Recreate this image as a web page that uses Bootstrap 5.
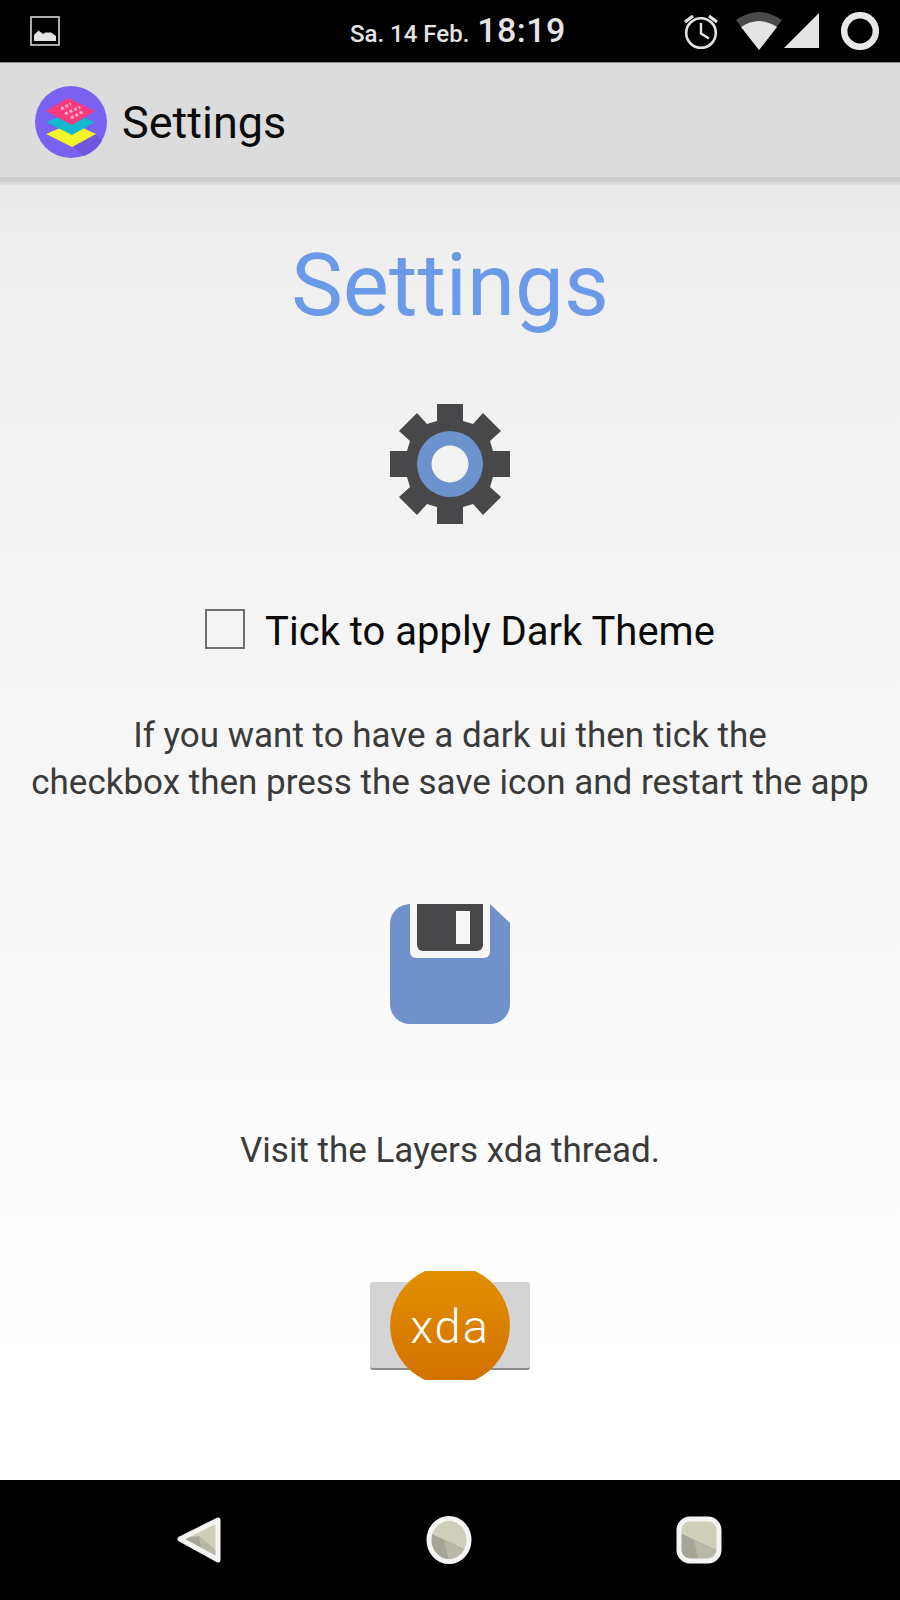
<!DOCTYPE html>
<html lang="en">
<head>
  <meta charset="UTF-8">
  <title>Settings</title>
  <link href="https://cdn.jsdelivr.net/npm/bootstrap@5.3.0/dist/css/bootstrap.min.css" rel="stylesheet">
  <style>
    body {
      font-family: Roboto, "Liberation Sans", sans-serif;
      background: #000;
      height: 1600px;
      overflow: hidden;
    }

    .status-bar {
      height: 63px;
      background: #000;
      border-bottom: 1px solid #8a8a8a;
      padding-left: 30px;
      padding-right: 21px;
      color: #e4e4e4;
    }

    .status-date {
      font-size: 24px;
      font-weight: 500;
      margin-right: 8px;
    }

    .status-time {
      font-size: 34px;
      font-weight: 500;
      letter-spacing: .4px;
    }

    .status-clock {
      margin-left: 290px;
      margin-top: 2px;
      line-height: 44px;
    }

    .status-icons {
      margin-left: auto;
    }

    .alarm-icon {
      margin-right: 16px;
    }

    .wifi-icon {
      margin-right: 2px;
    }

    .signal-icon {
      margin-right: 21px;
    }

    .app-bar {
      height: 114px;
      background: #dcdcdc;
      padding-left: 34px;
      padding-top: 4px;
      gap: 14px;
    }

    .app-title {
      font-size: 45px;
      color: #0b0b0b;
      line-height: 1;
    }

    .bar-shadow {
      height: 8px;
      background: linear-gradient(#cacaca, #d2d2d2 60%, #e2e2e2);
    }

    .page-body {
      height: 1295px;
      background: linear-gradient(#eaeaea, #efefef 5%, #ffffff 92%);
    }

    .page-title {
      font-size: 87px;
      font-weight: 400;
      color: #6b9ae8;
      line-height: 1;
      margin: 0;
      padding-top: 57px;
    }

    .gear-icon {
      margin-top: 75px;
    }

    .tick-row {
      margin-top: 85px;
      padding-left: 20px;
      gap: 20px;
    }

    .tick-box {
      width: 40px;
      height: 40px;
      border: 2px solid #6f6f6f;
    }

    .tick-label {
      font-size: 40px;
      color: #0a0a0a;
      line-height: 40px;
      padding-top: 3px;
    }

    .help-text {
      font-size: 35px;
      color: #3a3a3a;
      line-height: 47px;
      margin: 0;
    }

    .help-first {
      margin-top: 60px;
    }

    .save-icon {
      margin-top: 98px;
    }

    .visit-text {
      margin-top: 103px;
    }

    .xda-btn {
      width: 160px;
      height: 88px;
      margin-top: 108px;
      background: #d4d4d4;
      border-radius: 3px;
      border-bottom: 2px solid #8c8c8c;
    }

    .xda-icon {
      position: absolute;
      left: 20px;
      top: -11px;
    }

    .nav-bar {
      height: 120px;
      background: #000;
      padding-left: 174px;
      gap: 200px;
    }
  </style>
</head>
<body>
  <div class="status-bar d-flex align-items-center">
    <svg width="30" height="30" viewBox="0 0 30 30">
      <rect x="1" y="1" width="28" height="28" fill="none" stroke="#d8d8d8" stroke-width="1.6"/>
      <path d="M4 25V19L8.500 14.500L13 18L15.500 16.500L21 16.500L26 20V25Z" fill="#e4e4e4"/>
    </svg>
    <div class="status-clock d-flex align-items-baseline">
      <span class="status-date">Sa. 14 Feb.</span>
      <span class="status-time">18:19</span>
    </div>
    <div class="status-icons d-flex align-items-center">
      <svg class="alarm-icon" width="38" height="38" viewBox="0 0 38 38" fill="none" stroke="#e4e4e4">
        <circle cx="19" cy="21" r="14.800" stroke-width="2.600"/>
        <path d="M19 11V21.500L27 26.500" stroke-width="2.400"/>
        <path d="M3 10L11 4M35 10L27 4" stroke-width="3.200"/>
      </svg>
      <svg class="wifi-icon" width="46" height="38" viewBox="0 0 46 38">
        <path d="M0 8Q23 -8 46 8L23 38Z" fill="#4a4a4a"/>
        <path d="M5 15Q23 3 41 15L23 38Z" fill="#e4e4e4"/>
      </svg>
      <svg class="signal-icon" width="36" height="36" viewBox="0 0 36 36">
        <path d="M35 0V35H0Z" fill="#e4e4e4"/>
      </svg>
      <svg width="38" height="38" viewBox="0 0 38 38">
        <circle cx="19" cy="19" r="15.800" fill="none" stroke="#e8e8e8" stroke-width="6.500"/>
      </svg>
    </div>
  </div>

  <div class="app-bar d-flex align-items-center">
    <svg width="74" height="74" viewBox="0 0 74 74">
      <circle cx="37" cy="37" r="36" fill="#7b61ef"/>
      <path d="M40 62L62 49L68 56A36 36 0 0 1 50 71Z" fill="#6f56dc"/>
      <path d="M12 49L38 38L62 49L38 62Z" fill="#f2f52a"/>
      <path d="M12 37L36 28L61 37L38 50Z" fill="#12b8d0"/>
      <path d="M12 26L34 13L61 26L38 40Z" fill="#fb3a7c"/>
      <path d="M27 24L37 19M31 29L46 22M37 33L50 26" stroke="#fbb0c8" stroke-width="3" stroke-dasharray="3 2"/>
    </svg>
    <div class="app-title">Settings</div>
  </div>
  <div class="bar-shadow"></div>

  <main class="page-body d-flex flex-column align-items-center text-center">
    <h1 class="page-title">Settings</h1>

    <svg class="gear-icon" width="120" height="120" viewBox="0 0 120 120">
      <path fill="#48484a" d="M47 0H73V17L83 20L93 9L111 27L100 37L103 47H120V73H103L100 83L111 93L93 111L83 100L73 103V120H47V103L37 100L27 111L9 93L20 83L17 73H0V47H17L20 37L9 27L27 9L37 20L47 17Z"/>
      <circle cx="60" cy="60" r="33" fill="#6d93ce"/>
      <circle cx="60" cy="60" r="18.500" fill="#f2f2f2"/>
    </svg>

    <div class="tick-row d-flex align-items-start">
      <div class="tick-box"></div>
      <div class="tick-label">Tick to apply Dark Theme</div>
    </div>

    <p class="help-text help-first">If you want to have a dark ui then tick the<br>checkbox then press the save icon and restart the app</p>

    <svg class="save-icon" width="120" height="120" viewBox="0 0 120 120">
      <path fill="#7091c9" d="M20 0H100L120 19V100A20 20 0 0 1 100 120H20A20 20 0 0 1 0 100V20A20 20 0 0 1 20 0Z"/>
      <path fill="#f7f7f7" d="M20 0H100V48A6 6 0 0 1 94 54H26A6 6 0 0 1 20 48Z"/>
      <path fill="#48484a" d="M27 0H93V41A6 6 0 0 1 87 47H33A6 6 0 0 1 27 41Z"/>
      <rect x="66" y="7" width="14" height="33" fill="#f7f7f7"/>
    </svg>

    <p class="help-text visit-text">Visit the Layers xda thread.</p>

    <div class="xda-btn position-relative">
      <svg class="xda-icon" width="120" height="109" viewBox="0 0 120 109">
        <defs>
          <linearGradient id="xdaFill" x1="0" y1="0" x2="0" y2="1">
            <stop offset="0" stop-color="#e38f00"/>
            <stop offset="1" stop-color="#d27200"/>
          </linearGradient>
        </defs>
        <path fill="url(#xdaFill)" d="M35 0H85A60 60 0 0 1 85 109H35A60 60 0 0 1 35 0Z"/>
        <text x="60" y="72" text-anchor="middle" font-family="Roboto, sans-serif" font-weight="300" font-size="47" letter-spacing="2" fill="#fff">xda</text>
      </svg>
    </div>
  </main>

  <div class="nav-bar d-flex align-items-center">
    <svg width="50" height="52" viewBox="0 0 50 52">
      <defs>
        <clipPath id="backClip"><path d="M44 6V46L6 25Z"/></clipPath>
        <clipPath id="homeClip"><ellipse cx="25" cy="26" rx="20" ry="21.500"/></clipPath>
        <clipPath id="recentClip"><rect x="5" y="5" width="40" height="42" rx="11"/></clipPath>
      </defs>
      <g clip-path="url(#backClip)">
        <rect width="50" height="52" fill="#cfceb9"/>
        <path d="M0 25L25 22L50 44V52H0Z" fill="#a5a498"/>
        <path d="M25 22L50 44V52H30Z" fill="#b9b8a8"/>
      </g>
      <path d="M44 6V46L6 25Z" fill="none" stroke="#f4f4f4" stroke-width="5" stroke-linejoin="round"/>
    </svg>
    <svg width="50" height="52" viewBox="0 0 50 52">
      <g clip-path="url(#homeClip)">
        <rect width="50" height="52" fill="#cfceb9"/>
        <path d="M0 16L50 40V52H0Z" fill="#a5a498"/>
        <path d="M20 26L50 40V52H26Z" fill="#b9b8a8"/>
      </g>
      <ellipse cx="25" cy="26" rx="20" ry="21.500" fill="none" stroke="#f4f4f4" stroke-width="5"/>
    </svg>
    <svg width="50" height="52" viewBox="0 0 50 52">
      <g clip-path="url(#recentClip)">
        <rect width="50" height="52" fill="#cfceb9"/>
        <path d="M0 16L50 40V52H0Z" fill="#a5a498"/>
        <path d="M20 26L50 40V52H26Z" fill="#b9b8a8"/>
      </g>
      <rect x="5" y="5" width="40" height="42" rx="11" fill="none" stroke="#f4f4f4" stroke-width="5"/>
    </svg>
  </div>

  <script src="https://cdn.jsdelivr.net/npm/bootstrap@5.3.0/dist/js/bootstrap.bundle.min.js"></script>
</body>
</html>
